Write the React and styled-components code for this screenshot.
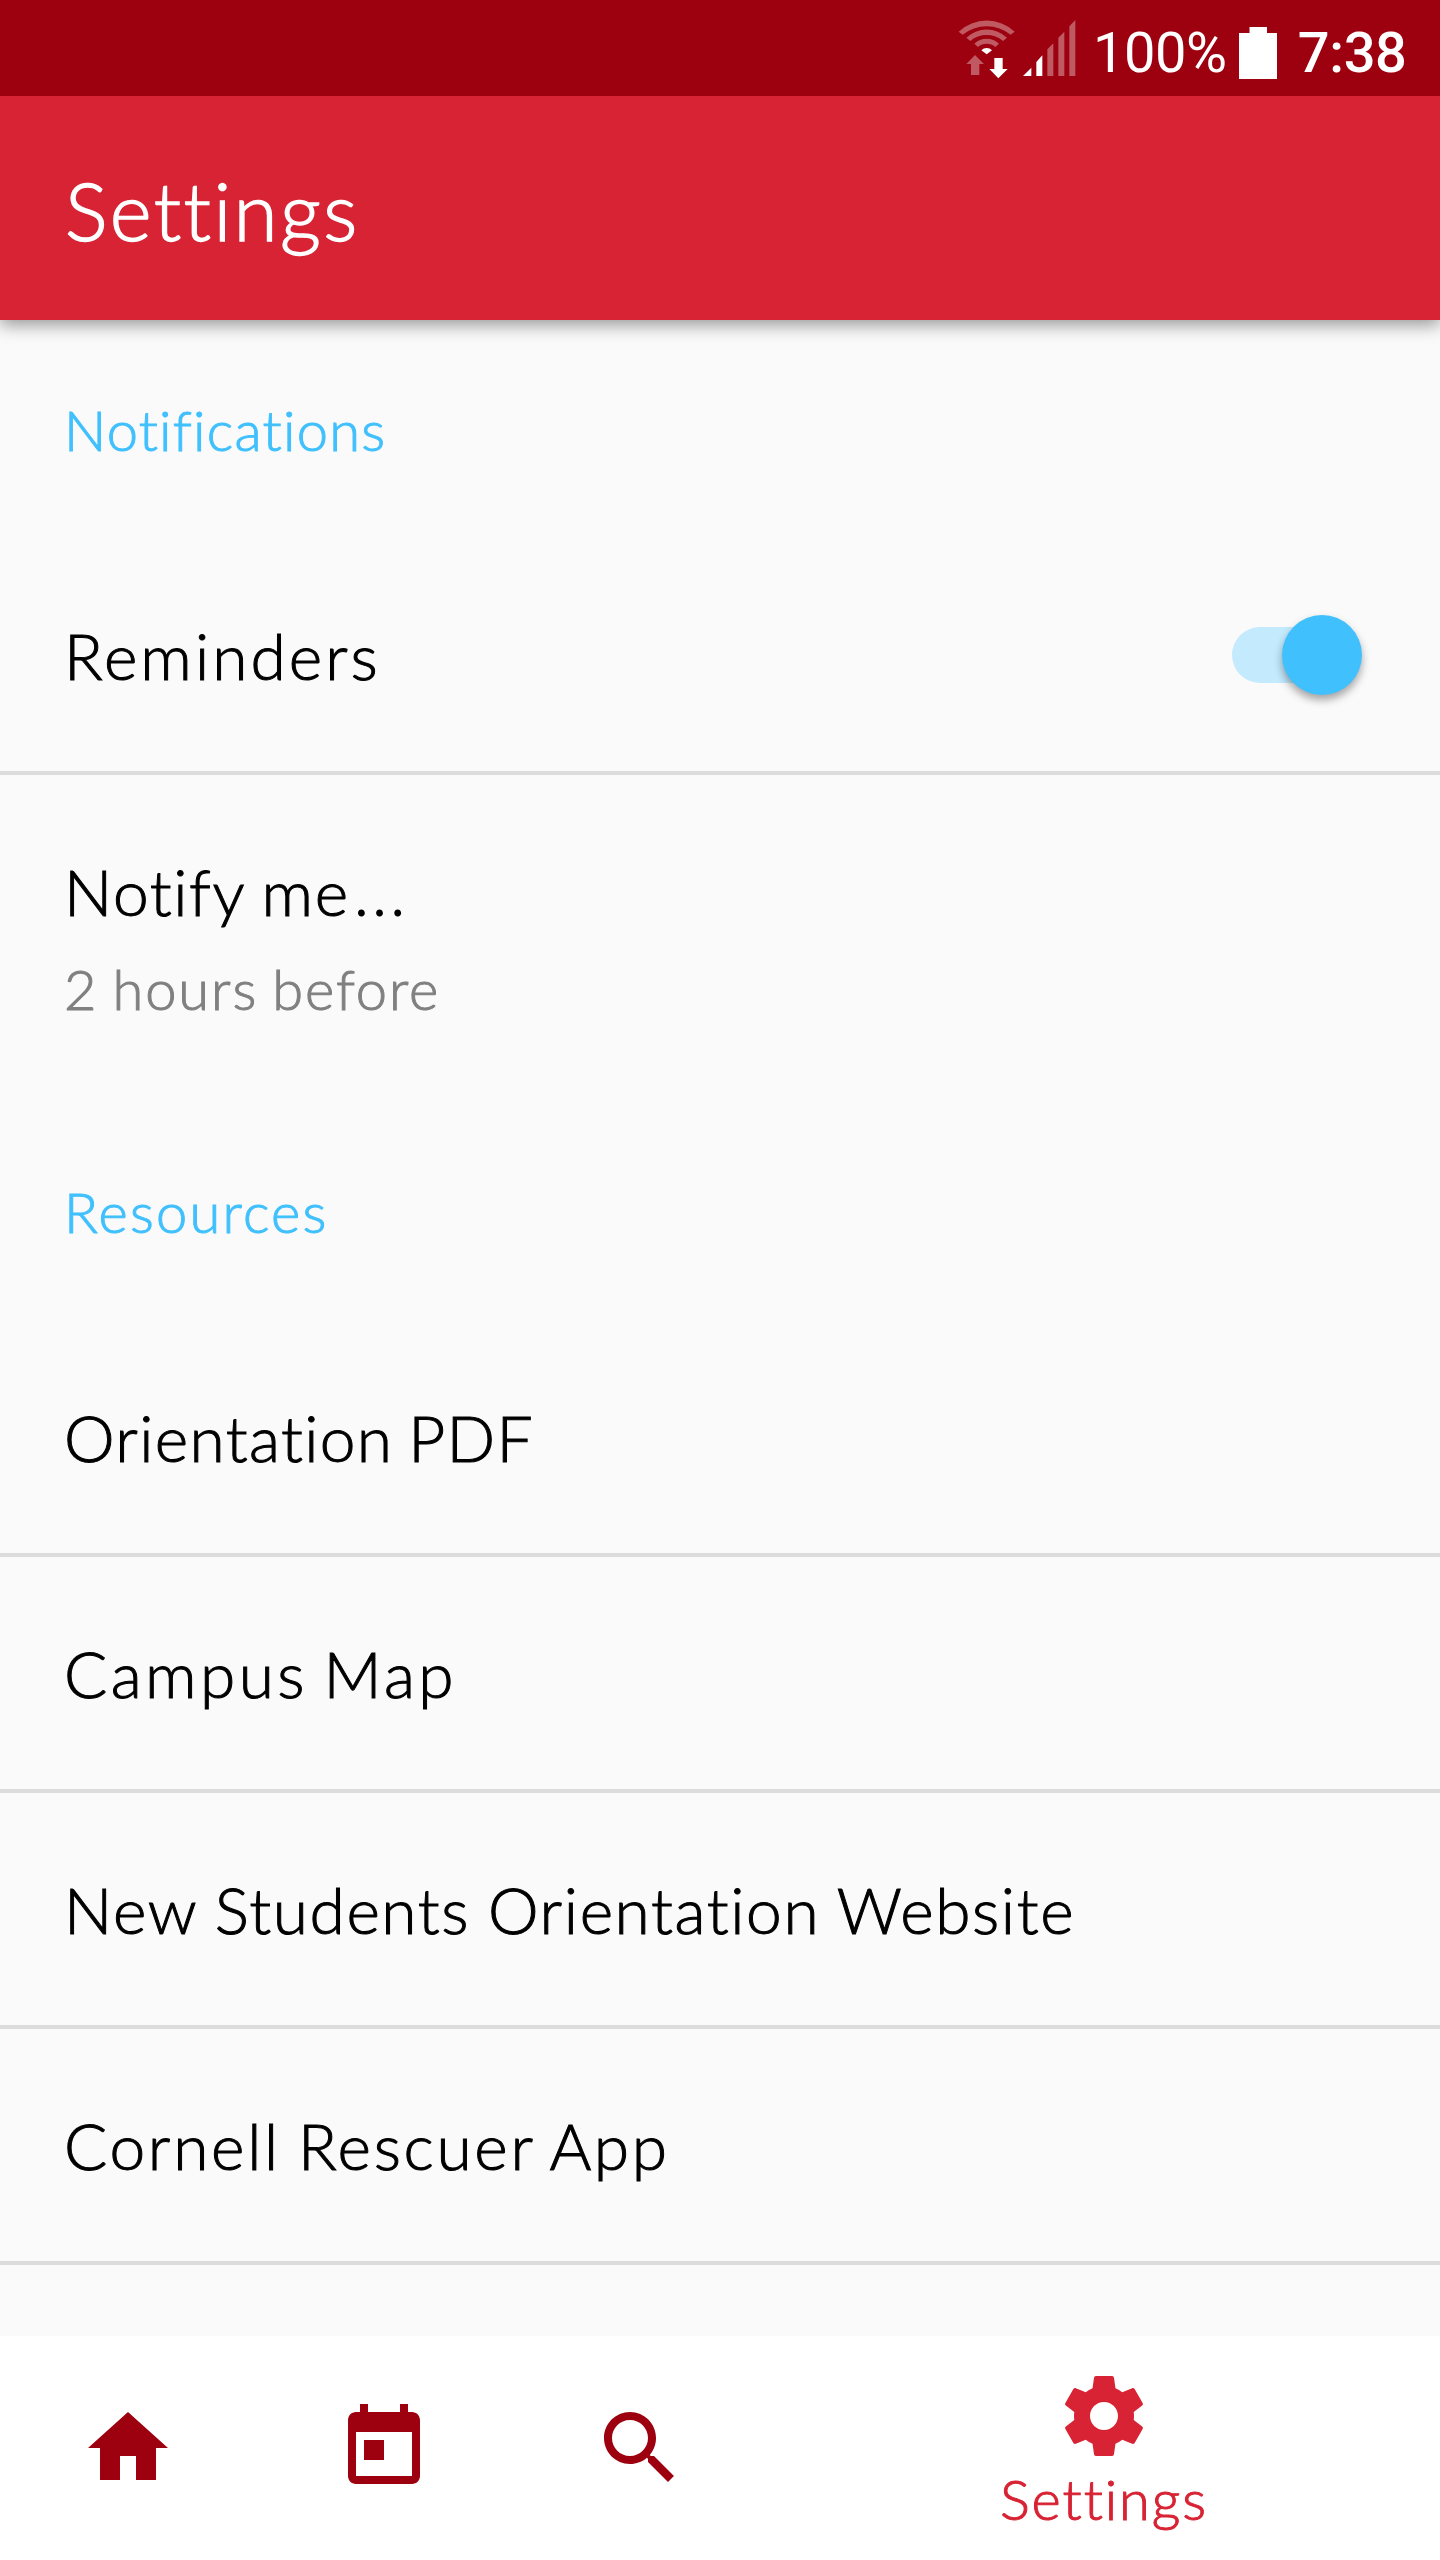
import React, { useState } from "react";
import styled, { createGlobalStyle } from "styled-components";

const colors = {
  statusBar: "#9d000e",
  primary: "#d82334",
  accent: "#40c0fd",
  accentTrack: "#c3eafd",
  background: "#fafafa",
  divider: "#dcdcdc",
  secondaryText: "#808080",
};

const GlobalStyle = createGlobalStyle`
  *, *::before, *::after { box-sizing: border-box; }
  body { margin: 0; background: ${colors.background}; }
`;

const Screen = styled.div`
  display: flex;
  flex-direction: column;
  width: 1440px;
  height: 2560px;
  overflow: hidden;
  background: ${colors.background};
  color: #000;
  font-family: Lato, "Liberation Sans", sans-serif;
  font-weight: 300;
  font-kerning: normal;
  font-variant-ligatures: none;
  white-space: nowrap;
  -webkit-text-stroke: 1px currentColor;
`;

const StatusBar = styled.div`
  display: flex;
  flex: none;
  height: 96px;
  padding: 20px 33.5px 0 0;
  justify-content: flex-end;
  background: ${colors.statusBar};
  color: #fff;
  font-family: Roboto, "Liberation Sans", sans-serif;
  font-size: 56px;
  line-height: 66px;
  -webkit-text-stroke: 0;
`;

const StatusIcons = styled.svg`
  flex: none;
  width: 120px;
  height: 60px;
  margin: -1px 16.3px 0 0;
  fill: #fff;
`;

const BatteryIcon = styled.svg`
  flex: none;
  width: 38px;
  height: 52px;
  margin: 7px 20.8px 0 12.5px;
  fill: #fff;
`;

const BatteryLevel = styled.span`
  font-weight: 400;
  letter-spacing: -0.47px;
`;

const Clock = styled.time`
  font-weight: 500;
  letter-spacing: -0.4px;
`;

const AppBar = styled.header`
  display: flex;
  flex: none;
  height: 224px;
  padding: 66px 0 0 65px;
  background: ${colors.primary};
  box-shadow: 0 5px 16px rgba(0, 0, 0, 0.4);
  clip-path: inset(0 0 -40px 0);
  color: #fff;
`;

const Title = styled.h1`
  margin: 0;
  font-size: 80px;
  font-weight: 300;
  line-height: 96px;
  letter-spacing: ${(p) => p.$tracking}px;
  -webkit-text-stroke-width: 1.4px;
`;

const Content = styled.main`
  flex: 1;
  min-height: 0;
  overflow: hidden;
`;

const SectionHeading = styled.h2`
  height: 219px;
  margin: 0;
  padding: 76px 64px 0;
  color: ${colors.accent};
  font-size: 56px;
  font-weight: 300;
  line-height: 68px;
  letter-spacing: ${(p) => p.$tracking}px;
`;

const Row = styled.div`
  display: flex;
  justify-content: space-between;
  height: ${(p) => (p.$tall ? 327 : 236)}px;
  padding: 78px 64px 0;
  border-bottom: ${(p) => (p.$tall ? "none" : `4px solid ${colors.divider}`)};
`;

const RowText = styled.div`
  display: flex;
  flex-direction: column;
  gap: 24px;
`;

const Label = styled.span`
  font-size: 64px;
  line-height: 78px;
  letter-spacing: ${(p) => p.$tracking}px;
  word-spacing: ${(p) => p.$wordGap || 0}px;
`;

const Ellipsis = styled.span`
  margin-left: 3px;
  font-size: 74px;
  line-height: 0;
  letter-spacing: 0;
  -webkit-text-stroke-width: 0;
`;

const Detail = styled.span`
  color: ${colors.secondaryText};
  font-size: 56px;
  line-height: 68px;
  letter-spacing: ${(p) => p.$tracking}px;
  word-spacing: -3px;
`;

const SwitchTrack = styled.button`
  display: flex;
  width: 120px;
  height: 56px;
  margin: 10px 24px 0 0;
  padding: 0;
  align-items: center;
  justify-content: ${(p) => (p.$on ? "flex-end" : "flex-start")};
  border: 0;
  border-radius: 28px;
  background: ${(p) => (p.$on ? colors.accentTrack : "#b9b9b9")};
`;

const SwitchThumb = styled.span`
  flex: none;
  width: 80px;
  height: 80px;
  margin-right: -10px;
  border-radius: 50%;
  background: ${(p) => (p.$on ? colors.accent : "#f1f1f1")};
  box-shadow: 0 5px 8px rgba(0, 0, 0, 0.35);
`;

const BottomNav = styled.nav`
  display: grid;
  flex: none;
  grid-template-columns: 256px 256px 256px 672px;
  height: 224px;
  background: #fff;
`;

const Tab = styled.a`
  display: flex;
  flex-direction: column;
  align-items: center;
  padding-top: ${(p) => (p.$active ? 32 : 64)}px;
  color: ${(p) => (p.$active ? colors.primary : colors.statusBar)};
`;

const TabIcon = styled.svg`
  flex: none;
  width: 96px;
  height: 96px;
  fill: currentColor;
`;

const TabLabel = styled.span`
  margin-top: 1px;
  font-size: 56px;
  line-height: 68px;
  letter-spacing: ${(p) => p.$tracking}px;
`;

const tabs = [
  { id: "home", path: "M10 20v-6h4v6h5v-8h3L12 3 2 12h3v8z" },
  {
    id: "today",
    path: "M19 3h-1V1h-2v2H8V1H6v2H5c-1.11 0-1.99.9-1.99 2L3 19c0 1.1.89 2 2 2h14c1.1 0 2-.9 2-2V5c0-1.1-.9-2-2-2zm0 16H5V8h14v11zM7 10h5v5H7z",
  },
  {
    id: "search",
    path: "M15.5 14h-.79l-.28-.27C15.41 12.59 16 11.11 16 9.5 16 5.91 13.09 3 9.5 3S3 5.91 3 9.5 5.91 16 9.5 16c1.61 0 3.09-.59 4.23-1.57l.27.28v.79l5 4.99L20.49 19l-4.99-5zm-6 0C7.01 14 5 11.99 5 9.5S7.01 5 9.5 5 14 7.01 14 9.5 11.99 14 9.5 14z",
  },
  {
    id: "settings",
    label: "Settings",
    path: "M19.43 12.98c.04-.32.07-.64.07-.98s-.03-.66-.07-.98l2.11-1.65c.19-.15.24-.42.12-.64l-2-3.46c-.12-.22-.39-.3-.61-.22l-2.49 1c-.52-.4-1.08-.73-1.69-.98l-.38-2.65C14.46 2.18 14.25 2 14 2h-4c-.25 0-.46.18-.49.42l-.38 2.65c-.61.25-1.17.59-1.69.98l-2.49-1c-.23-.09-.49 0-.61.22l-2 3.46c-.13.22-.07.49.12.64l2.11 1.65c-.04.32-.07.65-.07.98s.03.66.07.98l-2.11 1.65c-.19.15-.24.42-.12.64l2 3.46c.12.22.39.3.61.22l2.49-1c.52.4 1.08.73 1.69.98l.38 2.65c.03.24.24.42.49.42h4c.25 0 .46-.18.49-.42l.38-2.65c.61-.25 1.17-.59 1.69-.98l2.49 1c.23.09.49 0 .61-.22l2-3.46c.12-.22.07-.49-.12-.64l-2.11-1.65zM12 15.5c-1.93 0-3.5-1.57-3.5-3.5s1.57-3.5 3.5-3.5 3.5 1.57 3.5 3.5-1.57 3.5-3.5 3.5z",
  },
];

const resources = [
  { label: "Orientation PDF", tracking: 1.35, wordGap: -4 },
  { label: "Campus Map", tracking: 3.4, wordGap: -5 },
  { label: "New Students Orientation Website", tracking: 1.6, wordGap: -1 },
  { label: "Cornell Rescuer App", tracking: 2.72, wordGap: -3 },
];

function ConnectivityIcons() {
  return (
    <StatusIcons viewBox="50 57 360 180">
      <g opacity="0.35">
        <path d="M55 95A123 123 0 0 1 223 95L211 104A116 116 0 0 0 67 104Z" />
        <path d="M78 113A89 89 0 0 1 200 113L188 123A76 76 0 0 0 90 123Z" />
        <path d="M102 131A53 53 0 0 1 176 131L165 141A39 39 0 0 0 113 141Z" />
        <path d="M104 165L131 192H117V225H92V192H78Z" />
        <path d="M321 228V148L339 130V228ZM354 228V113L372 95V228ZM387 228V79L405 60V228Z" />
      </g>
      <path d="M123 151A22 22 0 0 1 155 151L139 163Z" />
      <path d="M162 174H187V207H202L174 235L147 207H162Z" />
      <path d="M248 228L273 203V228ZM288 228V186L306 166V228Z" />
    </StatusIcons>
  );
}

export default function App() {
  const [reminders, setReminders] = useState(true);
  return (
    <Screen>
      <GlobalStyle />
      <StatusBar>
        <ConnectivityIcons />
        <BatteryLevel>100%</BatteryLevel>
        <BatteryIcon viewBox="0 0 38 52">
          <path d="M10.5 0H28V6H38V52H0V6H10.5Z" />
        </BatteryIcon>
        <Clock>7:38</Clock>
      </StatusBar>
      <AppBar>
        <Title $tracking={2.4}>Settings</Title>
      </AppBar>
      <Content>
        <SectionHeading $tracking={1.25}>Notifications</SectionHeading>
        <Row>
          <Label $tracking={3.05}>Reminders</Label>
          <SwitchTrack
            role="switch"
            aria-checked={reminders}
            $on={reminders}
            onClick={() => setReminders(!reminders)}
          >
            <SwitchThumb $on={reminders} />
          </SwitchTrack>
        </Row>
        <Row $tall>
          <RowText>
            <Label $tracking={1.6} $wordGap={-2}>
              Notify me<Ellipsis>…</Ellipsis>
            </Label>
            <Detail $tracking={1.9}>2 hours before</Detail>
          </RowText>
        </Row>
        <SectionHeading $tracking={2.25}>Resources</SectionHeading>
        {resources.map((item) => (
          <Row key={item.label}>
            <Label $tracking={item.tracking} $wordGap={item.wordGap}>
              {item.label}
            </Label>
          </Row>
        ))}
      </Content>
      <BottomNav>
        {tabs.map((tab) => (
          <Tab key={tab.id} $active={Boolean(tab.label)}>
            <TabIcon viewBox="0 0 24 24">
              <path d={tab.path} />
            </TabIcon>
            {tab.label && <TabLabel $tracking={1.9}>{tab.label}</TabLabel>}
          </Tab>
        ))}
      </BottomNav>
    </Screen>
  );
}
